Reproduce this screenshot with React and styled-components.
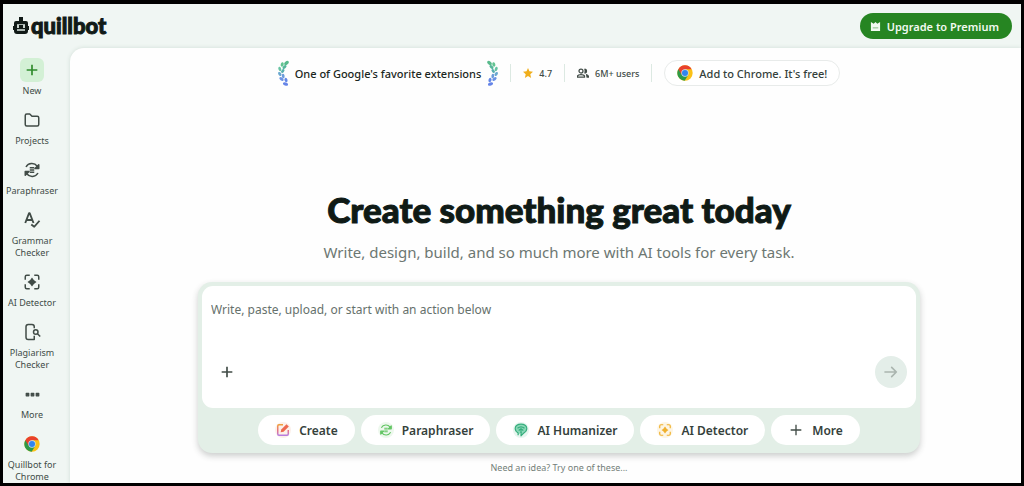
import React from "react";
import styled, { createGlobalStyle } from "styled-components";

const GlobalStyle = createGlobalStyle`
  * { box-sizing: border-box; }
  body {
    margin: 0;
    background: #000;
    color: #1b2722;
    font-family: "Noto Sans", "Open Sans", sans-serif;
  }
  button, textarea { font: inherit; color: inherit; margin: 0; }
  button { border: 0; cursor: pointer; }
  a { color: inherit; text-decoration: none; }
  svg { display: block; flex: none; }
`;

const Shell = styled.div`
  display: flex;
  flex-direction: column;
  height: 100vh;
  border: 3px solid #000;
  border-top-width: 4px;
  background: #f0f6f3;
  overflow: hidden;
`;

const Header = styled.header`
  display: flex;
  flex: none;
  align-items: center;
  justify-content: space-between;
  height: 44px;
  padding: 0 9px 0 10px;
`;

const Logo = styled.a`
  display: flex;
  align-items: center;
  gap: 2px;
  color: #111a17;
  font: 900 22px/28px Lato, sans-serif;
  -webkit-text-stroke: 1px #111a17;
`;

const Upgrade = styled.button`
  display: flex;
  align-items: center;
  gap: 6px;
  height: 26px;
  padding: 0 13px 0 10px;
  border-radius: 13px;
  background: #268522;
  color: #f2faf1;
  font-size: 11px;
  font-weight: 600;
`;

const Body = styled.div`
  display: flex;
  flex: 1;
  min-height: 0;
`;

const Sidebar = styled.nav`
  display: flex;
  flex: none;
  flex-direction: column;
  gap: 11px;
  width: 67px;
  padding: 10px 9px 0 0;
  overflow: hidden;
`;

const NavItem = styled.a`
  display: flex;
  flex: none;
  flex-direction: column;
  align-items: center;
  gap: 3px;
  color: #414c47;
  font-size: 9px;
  line-height: 12px;
  text-align: center;
`;

const NavIcon = styled.span`
  display: grid;
  place-items: center;
  width: 24px;
  height: 24px;
  border-radius: 6px;
  color: ${(p) => (p.$active ? "#2f8a2c" : "#414c47")};
  background: ${(p) => (p.$active ? "#d3f0d5" : "transparent")};
`;

const Panel = styled.main`
  display: flex;
  flex: 1;
  flex-direction: column;
  align-items: center;
  min-width: 0;
  padding: 12px 0 0 27px;
  border-top-left-radius: 14px;
  background: #fefefe;
  box-shadow: 0 0 4px #cfdcd5;
`;

const TrustBar = styled.div`
  display: flex;
  align-items: center;
  height: 26px;
  font-size: 11px;
  font-weight: 500;
  white-space: nowrap;
`;

const Award = styled.div`
  display: flex;
  align-items: center;
  gap: 6px;
`;

const Divider = styled.span`
  width: 1px;
  height: 18px;
  margin: 0 12px;
  background: #dce9e2;
`;

const Stat = styled.span`
  display: flex;
  align-items: center;
  gap: 6px;
  color: #414c47;
  font-size: 9px;
`;

const ChromeButton = styled.button`
  display: flex;
  align-items: center;
  gap: 6px;
  height: 26px;
  padding: 0 12px;
  border: 1px solid #e8ebea;
  border-radius: 13px;
  background: #fff;
  color: #35413b;
`;

const Title = styled.h1`
  margin: 105px 0 13px;
  color: #0f1a16;
  font: 900 35px/36px Lato, sans-serif;
  -webkit-text-stroke: 1px #0f1a16;
`;

const Subtitle = styled.p`
  margin: 0 0 18px;
  color: #6c7772;
  font-size: 15px;
  line-height: 24px;
`;

const Composer = styled.form`
  width: 100%;
  max-width: 722px;
  padding: 4px 4px 8px;
  border-radius: 14px;
  background: #e3efe7;
  box-shadow: 0 3px 6px rgba(40, 50, 45, 0.24);
`;

const Editor = styled.div`
  display: flex;
  flex-direction: column;
  justify-content: space-between;
  height: 122px;
  padding: 14px 9px 20px;
  border-radius: 11px;
  background: #fff;
`;

const Prompt = styled.textarea`
  width: 100%;
  height: 40px;
  padding: 0;
  border: 0;
  outline: 0;
  resize: none;
  background: transparent;
  font-size: 12px;
  line-height: 20px;
  &::placeholder { color: #66716c; opacity: 1; }
`;

const EditorActions = styled.div`
  display: flex;
  align-items: center;
  justify-content: space-between;
`;

const RoundButton = styled.button`
  display: grid;
  place-items: center;
  width: 32px;
  height: 32px;
  padding: 0;
  border-radius: 50%;
  background: ${(p) => (p.$filled ? "#e4eee9" : "transparent")};
  color: ${(p) => (p.$filled ? "#aab5af" : "#414c47")};
`;

const Chips = styled.div`
  display: flex;
  flex-wrap: wrap;
  justify-content: center;
  gap: 6px;
  padding-top: 7px;
`;

const Chip = styled.button`
  display: flex;
  align-items: center;
  gap: 8px;
  height: 30px;
  padding: 0 17px;
  border-radius: 15px;
  background: #fff;
  color: #35413b;
  font-size: 12px;
  font-weight: 600;
`;

const Tint = styled.span`
  display: grid;
  place-items: center;
  width: 16px;
  height: 16px;
  border-radius: 50%;
  color: ${(p) => p.$color};
  background: ${(p) => p.$bg};
`;

const Hint = styled.p`
  margin: 8px 0 0;
  color: #737e79;
  font-size: 9px;
  line-height: 14px;
`;

const Svg = ({ size = 18, box = 24, width = 2, children, ...rest }) => (
  <svg width={size} height={size} viewBox={`0 0 ${box} ${box}`} fill="none" stroke="currentColor"
    strokeWidth={width} strokeLinejoin="round" aria-hidden="true" {...rest}>
    {children}
  </svg>
);

const Robot = () => (
  <svg width="16" height="18" viewBox="0 0 16 18" fill="currentColor" aria-hidden="true">
    <path d="M6 0h4v4h3q2 0 2 2v3h1v4h-1v1q0 3-3 3H4q-3 0-3-3v-1H0V9h1V6q0-2 2-2h3z" />
    <path d="M4 7h8v1H4zM4 12h8v2H4z" fill="#a9b4af" />
    <path d="M4 8h2v3H4zM10 8h2v3h-2z" fill="#c9d3ce" />
  </svg>
);

const Crown = () => (
  <svg width="11" height="11" viewBox="0 0 12 12" fill="currentColor" aria-hidden="true">
    <path d="M1 1l3 2 2-2 2 2 3-2v10H1z" />
    <path d="M3 7h6v1H3z" fill="#7fb87c" />
  </svg>
);

const Plus = ({ size = 16, width = 2.5 }) => (
  <Svg size={size} width={width}><path d="M12 4v16M4 12h16" /></Svg>
);

const Folder = () => (
  <Svg><path d="M3 6q0-2 2-2h4l3 3h7q2 0 2 2v9q0 2-2 2H5q-2 0-2-2z" /></Svg>
);

const Rephrase = ({ size = 18, width = 2 }) => (
  <Svg size={size} width={width}>
    <path d="M4 8a9 9 0 0 1 15-1M20 16a9 9 0 0 1-15 1" />
    <path d="M21 5v5h-5zM3 19v-5h5z" fill="currentColor" />
    <path d="M9 9h6M9 12h6M9 15h6" />
  </Svg>
);

const Grammar = () => (
  <Svg width={2.5}><path d="M3 16L8 3h1l5 13M5 12h7" /><path d="M11 18l4 3 7-8" /></Svg>
);

const Detector = ({ size = 18, width = 2 }) => (
  <Svg size={size} width={width}>
    <path d="M3 9V5q0-2 2-2h4M15 3h4q2 0 2 2v4M21 15v4q0 2-2 2h-4M9 21H5q-2 0-2-2v-4" />
    <path d="M12 6q2 4 6 6-4 2-6 6-2-4-6-6 4-2 6-6z" fill="currentColor" stroke="none" />
  </Svg>
);

const Plagiarism = () => (
  <Svg>
    <path d="M15 7V5q0-3-3-3H7Q4 2 4 5v14q0 3 3 3h8v-5" />
    <circle cx="17" cy="12" r="3" /><path d="M19 14l4 4" />
  </Svg>
);

const Dots = () => (
  <Svg size={15}><path d="M2 10h4v4H2zM10 10h4v4h-4zM18 10h4v4h-4z" fill="currentColor" /></Svg>
);

const Chrome = () => (
  <svg width="16" height="16" viewBox="0 0 48 48" aria-hidden="true">
    <circle cx="24" cy="24" r="23" fill="#fbc116" />
    <path d="M4 12.500A23 23 0 0 0 23 47l11-18-10-5z" fill="#2d9a48" />
    <path d="M24 13h20a23 23 0 0 0-40-.5l10 17z" fill="#e9412d" />
    <circle cx="24" cy="24" r="11" fill="#cfe0f0" />
    <circle cx="24" cy="24" r="9" fill="#3285ee" />
  </svg>
);

const Laurel = ({ flip }) => (
  <svg width="11" height="26" viewBox="0 0 11 26" aria-hidden="true">
    <g transform={flip ? "translate(11 0) scale(-1 1)" : undefined}>
      <ellipse cx="8.500" cy="3" rx="2.600" ry="1.700" transform="rotate(-40 8.500 3)" fill="#58ba8c" />
      <ellipse cx="4.200" cy="4.500" rx="2.200" ry="1.500" transform="rotate(-75 4.200 4.500)" fill="#62c391" />
      <ellipse cx="6.500" cy="7" rx="2.400" ry="1.500" transform="rotate(-45 6.500 7)" fill="#55b69a" />
      <ellipse cx="1.800" cy="9" rx="2.200" ry="1.400" transform="rotate(75 1.800 9)" fill="#67c4a2" />
      <ellipse cx="4.800" cy="11" rx="2.200" ry="1.400" transform="rotate(-55 4.800 11)" fill="#58afaf" />
      <ellipse cx="1.800" cy="14" rx="2.200" ry="1.400" transform="rotate(60 1.800 14)" fill="#6ba8d0" />
      <ellipse cx="5.200" cy="16" rx="2.200" ry="1.400" transform="rotate(80 5.200 16)" fill="#6b9bda" />
      <ellipse cx="3.500" cy="19" rx="2.400" ry="1.500" transform="rotate(35 3.500 19)" fill="#6c93e4" />
      <ellipse cx="8" cy="20" rx="2.200" ry="1.500" transform="rotate(70 8 20)" fill="#6387e6" />
      <ellipse cx="7.500" cy="24" rx="2.600" ry="1.600" transform="rotate(20 7.500 24)" fill="#6685e8" />
    </g>
  </svg>
);

const Star = () => (
  <svg width="10" height="10" viewBox="0 0 24 24" fill="#f0ae1b" aria-hidden="true">
    <path d="M12 0l3.500 8 8.500 1-6.500 6 2 9-7.500-5-7.500 5 2-9L0 9l8.500-1z" />
  </svg>
);

const Users = () => (
  <svg width="12" height="10" viewBox="0 0 24 20" aria-hidden="true" fill="none" stroke="#414c47" strokeWidth="2.500">
    <circle cx="8" cy="6" r="4" /><path d="M1 18v-2q1-3 7-3t7 3v2z" />
    <path d="M15 2a4 4 0 0 1 0 8M18 13q5 1 5 5h-4" fill="#414c47" />
  </svg>
);

const Compose = () => (
  <Svg size={14} stroke="url(#compose)" width={2.5}>
    <defs>
      <linearGradient id="compose" x1="0" y1="0" x2="0" y2="1">
        <stop offset="0" stopColor="#f0a03c" /><stop offset=".5" stopColor="#e8707a" /><stop offset="1" stopColor="#b87ce0" />
      </linearGradient>
    </defs>
    <path d="M12 3H5Q3 3 3 5v14q0 2 2 2h14q2 0 2-2v-7" />
    <path d="M8 16l1-5 9-9 4 4-9 9z" fill="#ed684f" stroke="none" />
  </Svg>
);

const Humanizer = () => (
  <Svg size={14} width={2}>
    <path d="M7 21v-4Q2 14 2 9q1-7 10-7t10 7q0 5-5 8l-5 5v-6" fill="#8bd8b8" />
    <path d="M6 9q6-5 12 0M8 13l4-3 4 3M12 10v7" />
  </Svg>
);

const Arrow = () => (
  <Svg size={16} strokeLinecap="round" width={2.5}><path d="M3 12h17M13 5l7 7-7 7" /></Svg>
);

const navItems = [
  { label: "New", icon: <Plus />, active: true },
  { label: "Projects", icon: <Folder /> },
  { label: "Paraphraser", icon: <Rephrase /> },
  { label: "Grammar Checker", icon: <Grammar /> },
  { label: "AI Detector", icon: <Detector /> },
  { label: "Plagiarism Checker", icon: <Plagiarism /> },
  { label: "More", icon: <Dots /> },
  { label: "Quillbot for Chrome", icon: <Chrome /> },
];

const actions = [
  { label: "Create", icon: <Compose />, color: "#ed684f", bg: "#fcf0ea" },
  { label: "Paraphraser", icon: <Rephrase size={14} />, color: "#62c563", bg: "#edf8ed" },
  { label: "AI Humanizer", icon: <Humanizer />, color: "#35ad7c", bg: "#e6f6ef" },
  { label: "AI Detector", icon: <Detector size={14} />, color: "#f0b02d", bg: "#fdf5e3" },
  { label: "More", icon: <Plus width={2} />, color: "#414c47", bg: "transparent" },
];

export default function App() {
  return (
    <>
      <GlobalStyle />
      <Shell>
        <Header>
          <Logo href="#"><Robot />quillbot</Logo>
          <Upgrade type="button"><Crown />Upgrade to Premium</Upgrade>
        </Header>
        <Body>
          <Sidebar aria-label="Tools">
            {navItems.map((item) => (
              <NavItem href="#" key={item.label}>
                <NavIcon $active={item.active}>{item.icon}</NavIcon>
                {item.label}
              </NavItem>
            ))}
          </Sidebar>
          <Panel>
            <TrustBar>
              <Award><Laurel />One of Google's favorite extensions<Laurel flip /></Award>
              <Divider />
              <Stat><Star />4.7</Stat>
              <Divider />
              <Stat><Users />6M+ users</Stat>
              <Divider />
              <ChromeButton type="button"><Chrome />Add to Chrome. It's free!</ChromeButton>
            </TrustBar>
            <Title>Create something great today</Title>
            <Subtitle>Write, design, build, and so much more with AI tools for every task.</Subtitle>
            <Composer onSubmit={(e) => e.preventDefault()}>
              <Editor>
                <Prompt aria-label="Prompt" placeholder="Write, paste, upload, or start with an action below" />
                <EditorActions>
                  <RoundButton type="button" aria-label="Add attachment"><Plus /></RoundButton>
                  <RoundButton type="submit" aria-label="Send" $filled><Arrow /></RoundButton>
                </EditorActions>
              </Editor>
              <Chips>
                {actions.map((a) => (
                  <Chip type="button" key={a.label}>
                    <Tint $color={a.color} $bg={a.bg}>{a.icon}</Tint>
                    {a.label}
                  </Chip>
                ))}
              </Chips>
            </Composer>
            <Hint>Need an idea? Try one of these...</Hint>
          </Panel>
        </Body>
      </Shell>
    </>
  );
}
